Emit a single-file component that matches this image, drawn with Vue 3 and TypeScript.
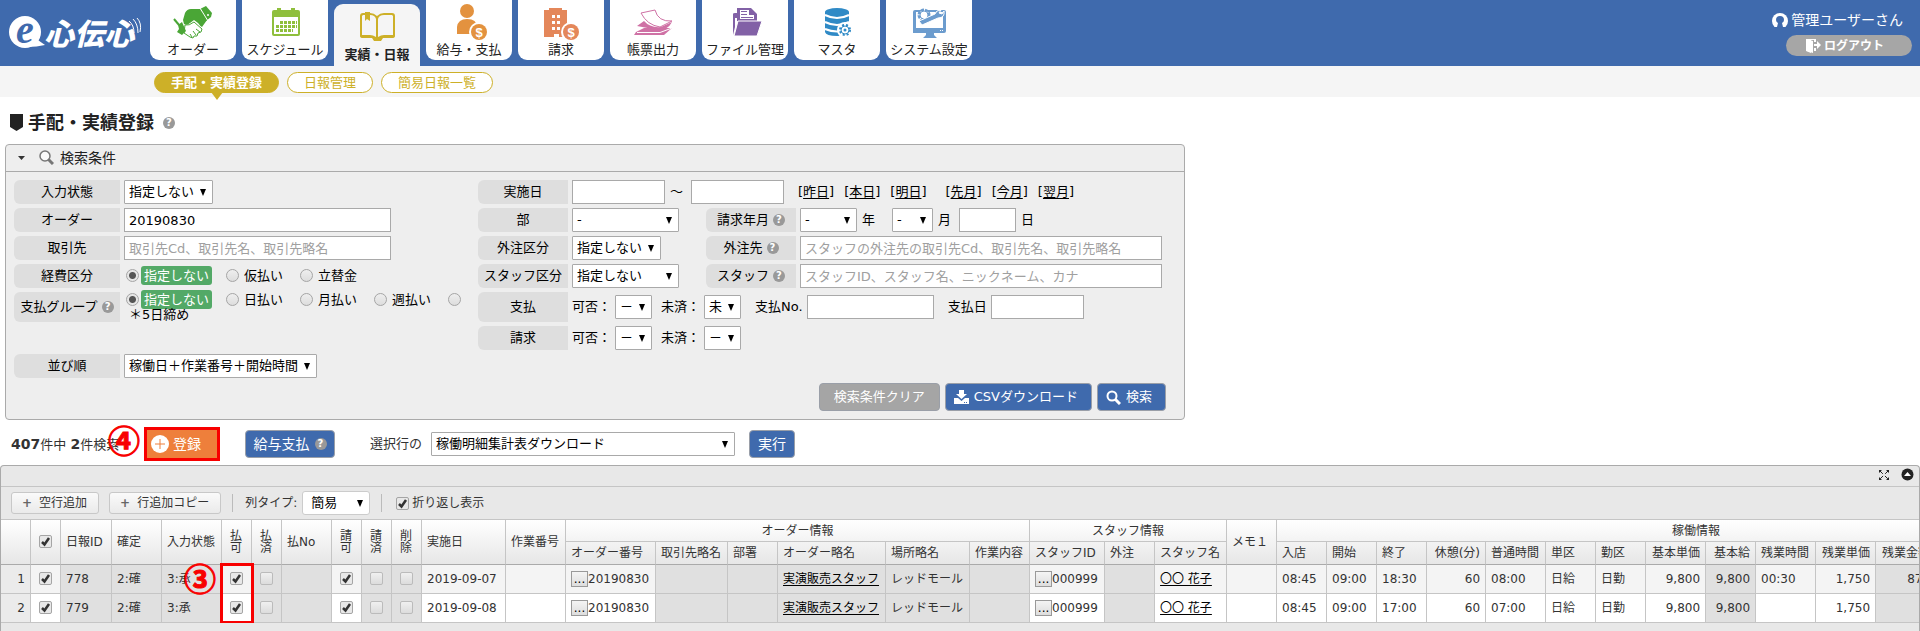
<script setup lang="ts">
import { ref, reactive } from 'vue'

interface Tab { key: string; label: string }
interface Column {
  key: string
  label: string
  width: number
  align?: 'right' | 'center'
  locked?: boolean
  kind?: 'check' | 'lookup' | 'link' | 'number'
  stacked?: boolean
}
interface Group { label: string; columns: Column[] }
type Row = Record<string, string | boolean>

const tabs: Tab[] = [
  { key: 'order', label: 'オーダー' },
  { key: 'schedule', label: 'スケジュール' },
  { key: 'report', label: '実績・日報' },
  { key: 'salary', label: '給与・支払' },
  { key: 'bill', label: '請求' },
  { key: 'print', label: '帳票出力' },
  { key: 'file', label: 'ファイル管理' },
  { key: 'master', label: 'マスタ' },
  { key: 'system', label: 'システム設定' },
]
const activeTab = ref('report')

const subTabs = ['手配・実績登録', '日報管理', '簡易日報一覧']
const activeSub = ref(subTabs[0])

const dayLinks = ['昨日', '本日', '明日']
const monthLinks = ['先月', '今月', '翌月']
const expenseOptions = ['指定しない', '仮払い', '立替金']
const payGroupOptions = ['指定しない', '日払い', '月払い', '週払い', '＊5日締め']

const form = reactive({
  order: '20190830',
  client: '',
  expense: '指定しない',
  payGroup: '指定しない',
  from: '',
  to: '',
  billDay: '',
  vendor: '',
  staff: '',
  payNo: '',
  payDate: '',
})
const wrapText = ref(true)
const allRows = ref(true)

const groups: Group[] = [
  {
    label: '',
    columns: [
      { key: 'id', label: '日報ID', width: 51, locked: true },
      { key: 'fixed', label: '確定', width: 50, locked: true },
      { key: 'state', label: '入力状態', width: 60, locked: true },
      { key: 'payOk', label: '払可', width: 30, kind: 'check', stacked: true },
      { key: 'paid', label: '払済', width: 30, kind: 'check', stacked: true, locked: true },
      { key: 'payNo', label: '払No', width: 50, locked: true },
      { key: 'billOk', label: '請可', width: 30, kind: 'check', stacked: true },
      { key: 'billed', label: '請済', width: 30, kind: 'check', stacked: true, locked: true },
      { key: 'removed', label: '削除', width: 30, kind: 'check', stacked: true, locked: true },
      { key: 'date', label: '実施日', width: 84 },
      { key: 'workNo', label: '作業番号', width: 60 },
    ],
  },
  {
    label: 'オーダー情報',
    columns: [
      { key: 'orderNo', label: 'オーダー番号', width: 90, kind: 'lookup' },
      { key: 'clientName', label: '取引先略名', width: 72, locked: true },
      { key: 'dept', label: '部署', width: 50, locked: true },
      { key: 'orderName', label: 'オーダー略名', width: 108, kind: 'link', locked: true },
      { key: 'place', label: '場所略名', width: 84, locked: true },
      { key: 'work', label: '作業内容', width: 60, locked: true },
    ],
  },
  {
    label: 'スタッフ情報',
    columns: [
      { key: 'staffId', label: 'スタッフID', width: 75, kind: 'lookup' },
      { key: 'outside', label: '外注', width: 50, locked: true },
      { key: 'staffName', label: 'スタッフ名', width: 72, kind: 'link' },
    ],
  },
  { label: '', columns: [{ key: 'memo', label: 'メモ１', width: 50 }] },
  {
    label: '稼働情報',
    columns: [
      { key: 'enter', label: '入店', width: 50 },
      { key: 'start', label: '開始', width: 50 },
      { key: 'end', label: '終了', width: 50 },
      { key: 'rest', label: '休憩(分)', width: 59, align: 'right' },
      { key: 'normal', label: '普通時間', width: 60 },
      { key: 'unit', label: '単区', width: 50 },
      { key: 'shift', label: '勤区', width: 50 },
      { key: 'basePrice', label: '基本単価', width: 60, align: 'right' },
      { key: 'basePay', label: '基本給', width: 50, align: 'right', locked: true },
      { key: 'overTime', label: '残業時間', width: 60 },
      { key: 'overPrice', label: '残業単価', width: 60, align: 'right' },
      { key: 'overPay', label: '残業金額', width: 60, align: 'right', locked: true },
      { key: 'spare', label: '', width: 180 },
    ],
  },
]
const columns = groups.flatMap((g) => g.columns)
const subColumns = groups.filter((g) => g.label).flatMap((g) => g.columns)
const tableWidth = columns.reduce((sum, c) => sum + c.width, 60)

const rows = reactive<Row[]>([
  {
    selected: true, id: '778', fixed: '2:確', state: '3:承', payOk: true, paid: false, billOk: true, billed: false,
    removed: false, date: '2019-09-07', orderNo: '20190830', orderName: '実演販売スタッフ', place: 'レッドモール',
    staffId: '000999', staffName: '〇〇 花子', enter: '08:45', start: '09:00', end: '18:30', rest: '60',
    normal: '08:00', unit: '日給', shift: '日勤', basePrice: '9,800', basePay: '9,800', overTime: '00:30',
    overPrice: '1,750', overPay: '875',
  },
  {
    selected: true, id: '779', fixed: '2:確', state: '3:承', payOk: true, paid: false, billOk: true, billed: false,
    removed: false, date: '2019-09-08', orderNo: '20190830', orderName: '実演販売スタッフ', place: 'レッドモール',
    staffId: '000999', staffName: '〇〇 花子', enter: '08:45', start: '09:00', end: '17:00', rest: '60',
    normal: '07:00', unit: '日給', shift: '日勤', basePrice: '9,800', basePay: '9,800', overPrice: '1,750',
  },
])
</script>

<template>
  <div class="page">
    <header class="top">
      <a class="logo" href="#" aria-label="e心伝心">
        <svg width="140" height="50" viewBox="0 0 140 50">
          <circle cx="18" cy="25" r="16" fill="#fff" />
          <path d="M28 31 L38 38 Q30 40 20 40 Z" fill="#fff" />
          <text x="9" y="36" class="logo-e">e</text>
          <text x="37" y="38" class="logo-text">心伝心</text>
          <path d="M122 14 Q127 18 127 26 M126 12 Q131 17 131 26 M130 11 Q135 16 133 25" fill="none" stroke="#fff" stroke-width="1" />
        </svg>
      </a>
      <nav class="tabs">
        <a v-for="t in tabs" :key="t.key" href="#" class="tab" :class="{ active: t.key === activeTab }" @click.prevent="activeTab = t.key">
          <svg width="86" height="42" viewBox="0 0 86 42">
            <g v-if="t.key === 'order'">
              <path d="M33 20 L35 13 Q37 9 41 9 L50 9 L57 20 L52 27 Q50 26 48 23 L44 20 L40 23 Q37 26 34 24 Z" fill="#4aa636" />
              <path d="M50 9 L56 6 L62 13 L61 17 L56 21 Z" fill="#4aa636" />
              <path d="M50 8 L58 21" stroke="#fff" stroke-width="1" />
              <circle cx="58" cy="15" r="1" fill="#fff" />
              <path d="M35 25 Q39 26 44 22 L52 29 L51 32 L48 33 L47 36 L44 36 L43 38 L40 37 L34 33 Z" fill="#fff" stroke="#4aa636" stroke-width="1" />
              <path d="M40 34 L42 37 M43 31 L46 35 M46 29 L50 32" stroke="#4aa636" stroke-width="1" />
              <path d="M24 19 L29 25" stroke="#4aa636" stroke-width="2" />
              <path d="M28 25 L32 22 L36 31 L32 35 L27 32 L29 29 Z" fill="#4aa636" />
            </g>
            <g v-else-if="t.key === 'schedule'" fill="#8fbf3c">
              <rect x="30" y="10" width="28" height="26" rx="2" />
              <rect x="35" y="8" width="4" height="5" /><rect x="49" y="8" width="4" height="5" />
              <rect x="32" y="17" width="24" height="17" fill="#fff" />
              <path d="M38 22.500H55 M34 26.500H55 M34 30.500H51" fill="none" stroke="#8fbf3c" stroke-width="3" stroke-dasharray="3 1" />
            </g>
            <g v-else-if="t.key === 'report'">
              <path d="M43 12 Q40 9 36 9 H29 Q26 9 26 12 V32 Q26 34 29 34 H38 L40 37 H47 L49 34 H58 Q61 34 61 32 V12 Q61 9 58 9 H50 Q46 9 43 12 Z" fill="#cdb028" />
              <path d="M29 11 H36 Q41 11 42 15 V33 Q39 31 36 31 H28 V12 Z M58 11 H50 Q45 11 44 15 V33 Q47 31 50 31 H59 V12 Z" fill="#f5f5f5" />
              <path d="M31 8 H36 V17 L33 15 L31 17 Z" fill="#cdb028" />
            </g>
            <g v-else-if="t.key === 'salary'" fill="#e3923f">
              <circle cx="41" cy="11" r="7" />
              <path d="M31 34 V27 Q32 19 41 19 Q51 19 51 27 V34 Z" />
              <circle cx="53" cy="32" r="10" fill="#fff" /><circle cx="53" cy="32" r="8" />
              <text x="53" y="37" class="coin">$</text>
            </g>
            <g v-else-if="t.key === 'bill'" fill="#e4875a">
              <path d="M26 10 H31 V8 H44 V10 H49 V37 H41 V34 H36 V37 H26 Z" />
              <path d="M34 16.500H44 M34 22.500H44 M34 28.500H44" stroke="#fff" stroke-width="3" stroke-dasharray="3 2" />
              <circle cx="53" cy="32" r="10" fill="#fff" /><circle cx="53" cy="32" r="8" />
              <text x="53" y="37" class="coin">$</text>
            </g>
            <g v-else-if="t.key === 'print'">
              <path d="M26 32 L34 28 H62 L54 35 H24 Z" fill="#cf71a5" />
              <path d="M27 32.500 H50 L62 28" fill="none" stroke="#fff" />
              <path d="M27 26 L34 21 Q40 28 51 27 L62 22 Q58 30 48 30 Z" fill="#cf71a5" />
              <path d="M31 13 L45 10 Q48 22 62 21 L50 27 Q37 25 31 13 Z" fill="#fff" stroke="#cf71a5" stroke-width="1" />
            </g>
            <g v-else-if="t.key === 'file'" fill="#8261a6">
              <path d="M31 35 V14 Q31 13 33 13 H36 V18 H33 V27 Z" />
              <path d="M35 8 H49 L55 14 V21 H35 Z" /><path d="M38 10 H47 V15 H52 V19 H38 Z" fill="#fff" />
              <path d="M39 11.500H45 M39 14.500H45 M39 17.500H51" stroke="#8261a6" stroke-width="1" />
              <path d="M36 21 H60 L55 36 H32 Z" stroke="#fff" stroke-width="1" />
            </g>
            <g v-else-if="t.key === 'master'" fill="#2f8ac6">
              <path d="M31 12 V32 Q32 36 43 36 Q55 36 55 32 V12 Z" />
              <ellipse cx="43" cy="12" rx="12" ry="4" />
              <path d="M31 15 Q43 21 55 15 M31 22 Q43 28 55 22 M31 29 Q43 34 55 29" fill="none" stroke="#fff" stroke-width="2" />
              <circle cx="51" cy="30" r="8" fill="#fff" />
              <circle cx="51" cy="30" r="5" fill="none" stroke="#2f8ac6" stroke-width="2" stroke-dasharray="2 2" />
              <circle cx="51" cy="30" r="4" fill="#fff" stroke="#2f8ac6" stroke-width="1" /><circle cx="51" cy="30" r="1.500" />
            </g>
            <g v-else fill="#6c9cce">
              <path d="M29 10 H58 Q60 10 60 12 V31 Q60 33 58 33 H27 V12 Q27 10 29 10 Z" />
              <path d="M30 12 H57 V28 H30 Z" fill="#fff" />
              <path d="M40 33 H48 V35 L51 38 H37 L40 35 Z" />
              <circle cx="38" cy="15" r="5" fill="#fff" stroke="#6c9cce" stroke-width="3" stroke-dasharray="3 1" />
              <circle cx="38" cy="15" r="4" fill="#fff" stroke="#6c9cce" stroke-width="1" />
              <path d="M33 21 L49 14 Q50 10 55 10 L53 13 L56 14 L58 11 Q59 18 52 18 L36 25 Z" stroke="#fff" stroke-width="1" />
              <path d="M54 30.500H58" stroke="#fff" stroke-dasharray="1 1" />
            </g>
          </svg>
          <span>{{ t.label }}</span>
        </a>
      </nav>
      <div class="user">
        <div class="user-name">
          <svg width="16" height="14" viewBox="0 0 16 14">
            <circle cx="8" cy="8" r="8" fill="#fff" />
            <path d="M8 3 Q12 3 12 7 Q12 9 10 10 L11 14 H5 L6 10 Q4 9 4 7 Q4 3 8 3 Z" fill="#3f6aad" />
          </svg>
          管理ユーザーさん
        </div>
        <button type="button" class="logout">
          <svg width="15" height="14" viewBox="0 0 15 14">
            <path d="M0 0 H10 V3 H8 V1 H5 V14 L0 12 Z M5 12 H8 V9 H10 V12 Z" fill="#fff" />
            <path d="M1 0 L7 2 V14 L1 12 Z" fill="#fff" />
            <path d="M8 5 H11 V2 L15 6 L11 10 V7 H8 Z" fill="#fff" />
          </svg>
          ログアウト
        </button>
      </div>
    </header>

    <nav class="subnav">
      <a v-for="s in subTabs" :key="s" href="#" class="pill" :class="{ active: s === activeSub }" @click.prevent="activeSub = s">{{ s }}</a>
    </nav>

    <div class="title">
      <svg width="13" height="17" viewBox="0 0 13 17"><path d="M0 0 H13 V13 L6.500 17 L0 13 Z" fill="#222" /></svg>
      <h1>手配・実績登録</h1>
      <button type="button" class="help" aria-label="ヘルプ">?</button>
    </div>

    <section class="search">
      <h2>
        <svg width="7" height="4" viewBox="0 0 7 4"><path d="M0 0 H7 L3.500 4 Z" fill="#333" /></svg>
        <svg width="15" height="15" viewBox="0 0 15 15">
          <circle cx="6" cy="6" r="5" fill="#fafafa" stroke="#777" stroke-width="1.500" />
          <path d="M9.500 9.500 L14 14" stroke="#777" stroke-width="3" />
        </svg>
        検索条件
      </h2>
      <form class="search-body" @submit.prevent>
        <div class="columns">
          <div class="left">
            <div class="row">
              <label class="cap" for="f-state">入力状態</label>
              <select id="f-state" class="w89"><option>指定しない</option></select>
            </div>
            <div class="row">
              <label class="cap" for="f-order">オーダー</label>
              <input id="f-order" v-model="form.order" type="text" class="w267" />
            </div>
            <div class="row">
              <label class="cap" for="f-client">取引先</label>
              <input id="f-client" v-model="form.client" type="text" class="w267" placeholder="取引先Cd、取引先名、取引先略名" />
            </div>
            <div class="row">
              <span class="cap">経費区分</span>
              <div class="radios single">
                <label v-for="o in expenseOptions" :key="o"><input v-model="form.expense" type="radio" name="expense" :value="o" /><span>{{ o }}</span></label>
              </div>
            </div>
            <div class="row tall">
              <span class="cap">支払グループ<button type="button" class="help" aria-label="ヘルプ">?</button></span>
              <div class="radios">
                <label v-for="o in payGroupOptions" :key="o"><input v-model="form.payGroup" type="radio" name="paygroup" :value="o" /><span>{{ o }}</span></label>
              </div>
            </div>
            <div class="row sort">
              <label class="cap" for="f-sort">並び順</label>
              <select id="f-sort" class="w193"><option>稼働日＋作業番号＋開始時間</option></select>
            </div>
          </div>

          <div class="right">
            <div class="row">
              <label class="cap" for="f-from">実施日</label>
              <input id="f-from" v-model="form.from" type="text" class="w93" />
              <span class="tilde">～</span>
              <input v-model="form.to" type="text" class="w93" aria-label="実施日（終了）" />
              <span class="links">
                <span v-for="l in dayLinks" :key="l">[<a href="#">{{ l }}</a>]</span>
              </span>
              <span class="links">
                <span v-for="l in monthLinks" :key="l">[<a href="#">{{ l }}</a>]</span>
              </span>
            </div>
            <div class="row">
              <label class="cap" for="f-dept">部</label>
              <div class="slot"><select id="f-dept" class="w107"><option>-</option></select></div>
              <span class="cap"><label for="f-year">請求年月</label><button type="button" class="help" aria-label="ヘルプ">?</button></span>
              <select id="f-year" class="w57"><option>-</option></select>
              <span class="unit year">年</span>
              <select class="w41" aria-label="請求月"><option>-</option></select>
              <span class="unit month">月</span>
              <input v-model="form.billDay" type="text" class="w57" aria-label="請求日" />
              <span class="unit">日</span>
            </div>
            <div class="row">
              <label class="cap" for="f-vendor-type">外注区分</label>
              <div class="slot"><select id="f-vendor-type" class="w89"><option>指定しない</option></select></div>
              <span class="cap"><label for="f-vendor">外注先</label><button type="button" class="help" aria-label="ヘルプ">?</button></span>
              <input id="f-vendor" v-model="form.vendor" type="text" class="w362" placeholder="スタッフの外注先の取引先Cd、取引先名、取引先略名" />
            </div>
            <div class="row">
              <label class="cap" for="f-staff-type">スタッフ区分</label>
              <div class="slot"><select id="f-staff-type" class="w107"><option>指定しない</option></select></div>
              <span class="cap"><label for="f-staff">スタッフ</label><button type="button" class="help" aria-label="ヘルプ">?</button></span>
              <input id="f-staff" v-model="form.staff" type="text" class="w362" placeholder="スタッフID、スタッフ名、ニックネーム、カナ" />
            </div>
            <div class="row tall">
              <span class="cap">支払</span>
              <label class="mini">可否：<select><option>－</option></select></label>
              <label class="mini">未済：<select><option>未</option></select></label>
              <label class="mini gap">支払No.<input v-model="form.payNo" type="text" class="w127" /></label>
              <label class="mini gap">支払日<input v-model="form.payDate" type="text" class="w93" /></label>
            </div>
            <div class="row">
              <span class="cap">請求</span>
              <label class="mini">可否：<select><option>－</option></select></label>
              <label class="mini">未済：<select><option>－</option></select></label>
            </div>
          </div>
        </div>
        <div class="actions">
          <button type="reset" class="btn gray">検索条件クリア</button>
          <button type="button" class="btn">
            <svg width="15" height="14" viewBox="0 0 15 14"><path d="M5 0 H10 V4 H13 L7.500 9 L2 4 H5 Z" fill="#fff" /><path d="M0 8 H4 L7.500 11 L11 8 H15 V14 H0 Z" fill="#fff" /><path d="M10 12.500 H13" stroke="#3f6aad" stroke-dasharray="1 1" /></svg>
            CSVダウンロード
          </button>
          <button type="submit" class="btn">
            <svg width="15" height="15" viewBox="0 0 15 15"><circle cx="6" cy="6" r="4.500" fill="none" stroke="#fff" stroke-width="2" /><path d="M9 9 L14 14" stroke="#fff" stroke-width="3" /></svg>
            検索
          </button>
        </div>
      </form>
    </section>

    <div class="bulk">
      <p class="count"><b>407</b>件中 <b>2</b>件検索</p>
      <div class="register">
        <button type="button">
          <svg width="18" height="18" viewBox="0 0 18 18"><circle cx="9" cy="9" r="9" fill="#fff" /><path d="M9 4 V14 M4 9 H14" stroke="#ee7f3b" stroke-width="1" /></svg>
          登録
        </button>
        <span class="mark">④</span>
      </div>
      <button type="button" class="btn large pay">給与支払<span class="help">?</span></button>
      <label for="f-bulk">選択行の</label>
      <select id="f-bulk" class="w304"><option>稼働明細集計表ダウンロード</option></select>
      <button type="button" class="btn large">実行</button>
    </div>

    <section class="grid">
      <div class="grid-top">
        <button type="button" aria-label="全画面">
          <svg width="10" height="10" viewBox="0 0 10 10"><path d="M0 0 H3 L0 3 Z M10 0 V3 L7 0 Z M0 10 V7 L3 10 Z M10 10 H7 L10 7 Z" fill="#222" /><path d="M1 1 L9 9 M9 1 L1 9" stroke="#222" stroke-width="1" stroke-dasharray="4 3" /></svg>
        </button>
        <button type="button" aria-label="閉じる">
          <svg width="13" height="13" viewBox="0 0 13 13"><circle cx="6.500" cy="6.500" r="6" fill="#222" /><path d="M3 8 L6.500 4 L10 8 Z" fill="#fff" /></svg>
        </button>
      </div>
      <div class="toolbar">
        <button type="button" class="tool"><i>+</i>空行追加</button>
        <button type="button" class="tool"><i>+</i>行追加コピー</button>
        <span class="sep"></span>
        <label for="f-type">列タイプ:</label>
        <select id="f-type" class="type"><option>簡易</option></select>
        <span class="sep"></span>
        <label class="wrap"><input v-model="wrapText" type="checkbox" />折り返し表示</label>
      </div>
      <div class="scroller">
        <table :style="{ width: tableWidth + 'px' }">
          <colgroup>
            <col class="narrow" /><col class="narrow" />
            <col v-for="c in columns" :key="c.key" :style="{ width: c.width + 'px' }" />
          </colgroup>
          <thead>
            <tr class="h1">
              <th rowspan="2"></th>
              <th rowspan="2" class="center"><input v-model="allRows" type="checkbox" aria-label="全選択" /></th>
              <template v-for="(g, gi) in groups" :key="gi">
                <th v-if="g.label" :colspan="g.columns.length" class="group">{{ g.label }}</th>
                <template v-else>
                  <th v-for="c in g.columns" :key="c.key" rowspan="2" :class="{ stacked: c.stacked }">{{ c.label }}</th>
                </template>
              </template>
            </tr>
            <tr class="h2">
              <th v-for="c in subColumns" :key="c.key" :class="c.align">{{ c.label }}</th>
            </tr>
          </thead>
          <tbody>
            <tr v-for="(r, i) in rows" :key="i">
              <td class="num">{{ i + 1 }}</td>
              <td class="center"><input v-model="r.selected" type="checkbox" aria-label="選択" /></td>
              <td v-for="c in columns" :key="c.key" :class="[c.align, { locked: c.locked, center: c.kind === 'check', marked: c.key === 'payOk' && i === 0 }]">
                <input v-if="c.kind === 'check'" v-model="r[c.key]" type="checkbox" :class="{ dim: c.locked }" :aria-label="c.label" />
                <div v-else-if="c.kind === 'lookup'" class="lookup"><button type="button">...</button>{{ r[c.key] }}</div>
                <a v-else-if="c.kind === 'link'" href="#">{{ r[c.key] }}</a>
                <template v-else>{{ r[c.key] }}</template>
                <span v-if="c.key === 'payOk' && i === 0" class="frame"><span class="mark">③</span></span>
              </td>
            </tr>
          </tbody>
        </table>
      </div>
    </section>
  </div>
</template>

<style>
body {
  margin: 0;
  background: #fff;
}
</style>

<style scoped>
.page, .page button, .page input, .page select {
  font-family: "DejaVu Sans", "Noto Sans CJK JP", sans-serif;
}
.page {
  display: flex;
  flex-direction: column;
  min-height: 100vh;
  color: #222;
  font-size: 13px;
  line-height: 18px;
  overflow: hidden;
}
.page *, .page *::after { box-sizing: border-box; }
svg { flex: none; display: block; }
button { margin: 0; padding: 0; border: 0; background: none; color: inherit; font-size: 13px; line-height: 18px; }

.top { display: flex; height: 66px; background: #3f6aad; }
.logo { width: 150px; padding: 7px 0 0 7px; flex: none; }
.logo-e { font: italic 700 40px "Liberation Serif", serif; fill: #3f6aad; }
.logo-text { font: italic 900 30px "Noto Sans CJK JP", sans-serif; fill: #fff; }
.coin { font: 700 13px "Liberation Sans", sans-serif; fill: #fff; text-anchor: middle; }
.tabs { display: flex; gap: 6px; }
.tab {
  width: 86px;
  height: 60px;
  border-radius: 0 0 9px 9px;
  background: #fff;
  color: #222;
  text-align: center;
  text-decoration: none;
  white-space: nowrap;
}
.tab span { display: block; line-height: 16px; }
.tab.active { height: 62px; margin-top: 4px; border-radius: 9px 9px 0 0; background: #f5f5f5; font-weight: 700; }
.tab.active span { line-height: 18px; }
.user { margin-left: auto; padding: 10px 8px 0 0; color: #fff; display: flex; flex-direction: column; align-items: flex-end; gap: 5px; }
.user-name { display: flex; align-items: center; gap: 3px; padding-right: 9px; font-size: 14px; line-height: 20px; }
.logout {
  display: flex;
  align-items: center;
  justify-content: center;
  gap: 3px;
  width: 126px;
  height: 21px;
  padding-right: 8px;
  border-radius: 11px;
  background: #a6a6a6;
  font-size: 12px;
  font-weight: 700;
}

.subnav { display: flex; gap: 8px; height: 31px; padding: 6px 0 0 154px; background: #f5f5f5; }
.pill {
  position: relative;
  height: 21px;
  padding: 0 16px;
  border: 1px solid #cdb028;
  border-radius: 11px;
  background: #fff;
  color: #cdb028;
  line-height: 19px;
  text-decoration: none;
}
.pill.active { background: #cdb028; color: #fff; font-weight: 700; }
.pill.active::after {
  content: "";
  position: absolute;
  left: 50%;
  top: 100%;
  margin-left: -6px;
  border: 6px solid transparent;
  border-top: 8px solid #cdb028;
  border-bottom: 0;
}

.title { display: flex; align-items: center; gap: 5px; height: 47px; padding: 4px 0 0 10px; }
.title h1 { margin: 0; font-size: 18px; line-height: 24px; }
.title .help { margin-left: 4px; }
.help {
  display: inline-block;
  flex: none;
  width: 12px;
  height: 12px;
  border-radius: 50%;
  background: #999;
  color: #fff;
  font-size: 10px;
  font-weight: 700;
  line-height: 12px;
  text-align: center;
}

.search { max-width: 1180px; margin: 0 5px; border: 1px solid #aaa; border-radius: 4px; background: #eee; color: #000; }
.search h2 {
  display: flex;
  align-items: center;
  height: 27px;
  margin: 0;
  padding: 0 0 1px 12px;
  border-bottom: 1px solid #aaa;
  font-size: 14px;
  font-weight: 400;
  color: #222;
}
.search h2 svg + svg { margin: 0 6px 0 14px; }
.search-body { padding: 8px 18px 8px 8px; }
.columns { display: flex; }
.left { width: 464px; flex: none; }
.left, .right { display: flex; flex-direction: column; gap: 4px; }
.row { display: flex; align-items: center; min-height: 24px; white-space: nowrap; }
.row.tall { min-height: 30px; }
.row.sort { margin-top: 28px; }
.cap {
  display: flex;
  align-items: center;
  align-self: stretch;
  justify-content: center;
  gap: 4px;
  width: 106px;
  margin-right: 4px;
  border-radius: 6px 0 0 6px;
  background: #dedede;
}
.right .cap { width: 90px; }
.left .cap, .right .cap { flex: none; }

input[type="text"], select {
  appearance: none;
  height: 24px;
  margin: 0;
  padding: 0 4px;
  border: 1px solid #a9a9a9;
  border-radius: 0;
  background-color: #fff;
  color: #000;
  font-size: 13px;
  line-height: 18px;
}
select {
  padding-right: 14px;
  border-radius: 1px;
  background-image: url("data:image/svg+xml,%3Csvg xmlns='http://www.w3.org/2000/svg' width='6' height='7'%3E%3Cpath d='M0 0H6L3 7Z'/%3E%3C/svg%3E");
  background-repeat: no-repeat;
  background-position: right 6px center;
}
::placeholder { color: #a0a0a0; opacity: 1; }
.w41 { width: 41px; }
.w57 { width: 57px; }
.w89 { width: 89px; }
.w93 { width: 93px; }
.w107 { width: 107px; }
.w127 { width: 127px; }
.w193 { width: 193px; }
.w267 { width: 267px; }
.w304 { width: 304px; }
.w362 { width: 362px; }

.radios { flex: 1; padding-left: 2px; line-height: 15px; white-space: normal; }
.radios.single { padding-bottom: 2px; }
.radios label { margin-right: 14px; }
.radios span { padding: 2px 3px; border-radius: 3px; }
.radios input:checked + span { background: #53a967; color: #fff; }
input[type="radio"] {
  appearance: none;
  width: 13px;
  height: 13px;
  margin: 0 2px 0 0;
  border: 1px solid #a5a5a5;
  border-radius: 50%;
  background: linear-gradient(#eee, #ddd);
  vertical-align: -2px;
}
input[type="radio"]:checked { background: radial-gradient(circle, #555 0 3px, #e6e6e6 4px); }
input[type="checkbox"] {
  appearance: none;
  flex: none;
  display: block;
  width: 13px;
  height: 13px;
  margin: 0;
  border: 1px solid #a5a5a5;
  border-radius: 2px;
  background: linear-gradient(#f0f0f0, #dcdcdc);
}
input[type="checkbox"]:checked {
  background: url("data:image/svg+xml,%3Csvg xmlns='http://www.w3.org/2000/svg' width='11' height='11'%3E%3Cpath d='M2 6L4.500 8.500L9 2' fill='none' stroke='%23333' stroke-width='2.500'/%3E%3C/svg%3E") center no-repeat #e8e8e8;
}
input[type="checkbox"].dim { border-color: #bbb; }

.tilde { width: 26px; padding-left: 5px; }
.links { display: flex; gap: 10px; margin-left: 14px; }
.links + .links { margin-left: 19px; }
.links a, td a { color: #000; text-decoration: underline; text-underline-offset: 2px; }
.slot { width: 134px; }
.unit { padding-left: 5px; }
.unit.year { width: 35px; }
.unit.month { width: 26px; }
.mini { display: flex; align-items: center; gap: 4px; margin-right: 9px; }
.mini select { width: 37px; }
.mini.gap { margin: 0 9px 0 5px; }

.actions { display: flex; justify-content: flex-end; gap: 5px; margin-top: 5px; }
.btn {
  display: flex;
  align-items: center;
  justify-content: center;
  gap: 5px;
  height: 28px;
  padding: 0 13px 0 8px;
  border: 1px solid #9a9fa8;
  border-radius: 4px;
  background: #3f6aad;
  color: #fff;
  white-space: nowrap;
}
.btn.gray { padding: 0 14px; background: #a5a5a5; }
.btn.large { padding: 0 8px; font-size: 14px; }
.btn.pay { width: 90px; margin-right: 35px; padding: 0 7px; }

.bulk { display: flex; align-items: center; height: 28px; margin: 10px 0 7px; padding-left: 11px; color: #333; white-space: nowrap; }
.count { width: 133px; margin: 0; flex: none; }
.count b { font-size: 14px; }
.register { position: relative; flex: none; width: 76px; margin: -3px 25px -3px 0; border: 3px solid #f80000; }
.register button {
  display: flex;
  align-items: center;
  gap: 4px;
  width: 100%;
  height: 28px;
  padding-left: 4px;
  background: #ee7f3b;
  color: #fff;
  font-size: 14px;
}
.mark {
  position: absolute;
  color: #f80000;
  font: 700 32px/32px "Noto Sans CJK JP", sans-serif;
  -webkit-text-stroke: 1px #f80000;
}
.register .mark { left: -39px; top: -7px; }
.bulk .w304 { margin: 0 14px 0 9px; }

.grid { flex: 1; border: 1px solid #aaa; border-bottom: 0; border-radius: 4px 4px 0 0; background: #e8e8e8; color: #333; font-size: 12px; }
.grid-top { display: flex; align-items: center; justify-content: flex-end; gap: 12px; height: 21px; padding: 0 5px 3px 0; border-bottom: 1px solid #c5c5c5; }
.toolbar { display: flex; align-items: center; height: 33px; padding-left: 10px; border-bottom: 1px solid #c5c5c5; white-space: nowrap; }
.tool {
  height: 22px;
  margin-right: 10px;
  padding: 0 11px 0 10px;
  border: 1px solid #c8c8c8;
  border-radius: 3px;
  background: linear-gradient(#fafafa, #eaeaea);
  font-size: 12px;
}
.tool i { margin-right: 7px; color: #666; font-style: normal; font-weight: 700; }
.tool + .tool { margin-right: 11px; }
.sep { width: 1px; height: 18px; margin-right: 12px; background: #bbb; }
.type { width: 68px; margin: 0 11px 0 5px; padding-left: 8px; border-color: #ccc; border-radius: 3px; }
.sep + .wrap { margin-left: 2px; }
.wrap { display: flex; align-items: center; gap: 3px; }

.scroller { overflow: hidden; }
table { table-layout: fixed; border-collapse: separate; border-spacing: 0; }
.narrow { width: 30px; }
thead { background: linear-gradient(#fff, #e6e6e6); }
th, td {
  padding: 0 5px;
  border-right: 1px solid #c5c5c5;
  border-bottom: 1px solid #c5c5c5;
  font-weight: 400;
  line-height: 18px;
  text-align: left;
  white-space: nowrap;
}
th[rowspan], .h2 th { border-bottom-color: #aaa; }
.h1 { height: 22px; }
.h2 { height: 23px; }
th.group { text-align: center; }
th.stacked { padding: 0 8px; line-height: 12px; white-space: normal; word-break: break-all; }
tbody tr { height: 29px; background: #fff; }
tbody tr:nth-child(odd) { background: #f4f4f4; }
th.right, td.right { display: table-cell; text-align: right; }
td.num { background: #ebebeb; text-align: right; }
td.locked { background: #e0e0e0; }
.center input { margin: 0 auto; }
th.center, td.center { padding: 0 0 2px; }
.lookup { display: flex; align-items: center; }
.lookup button { width: 17px; height: 16px; border: 1px solid #999; background: linear-gradient(#f4f4f4, #ddd); color: #000; font-size: 12px; line-height: 12px; }
td.marked { position: relative; }
.frame { position: absolute; left: -2px; top: -2px; width: 34px; height: 61px; border: 3px solid #f80000; pointer-events: none; }
.frame .mark { left: -39px; top: -5px; }
</style>
